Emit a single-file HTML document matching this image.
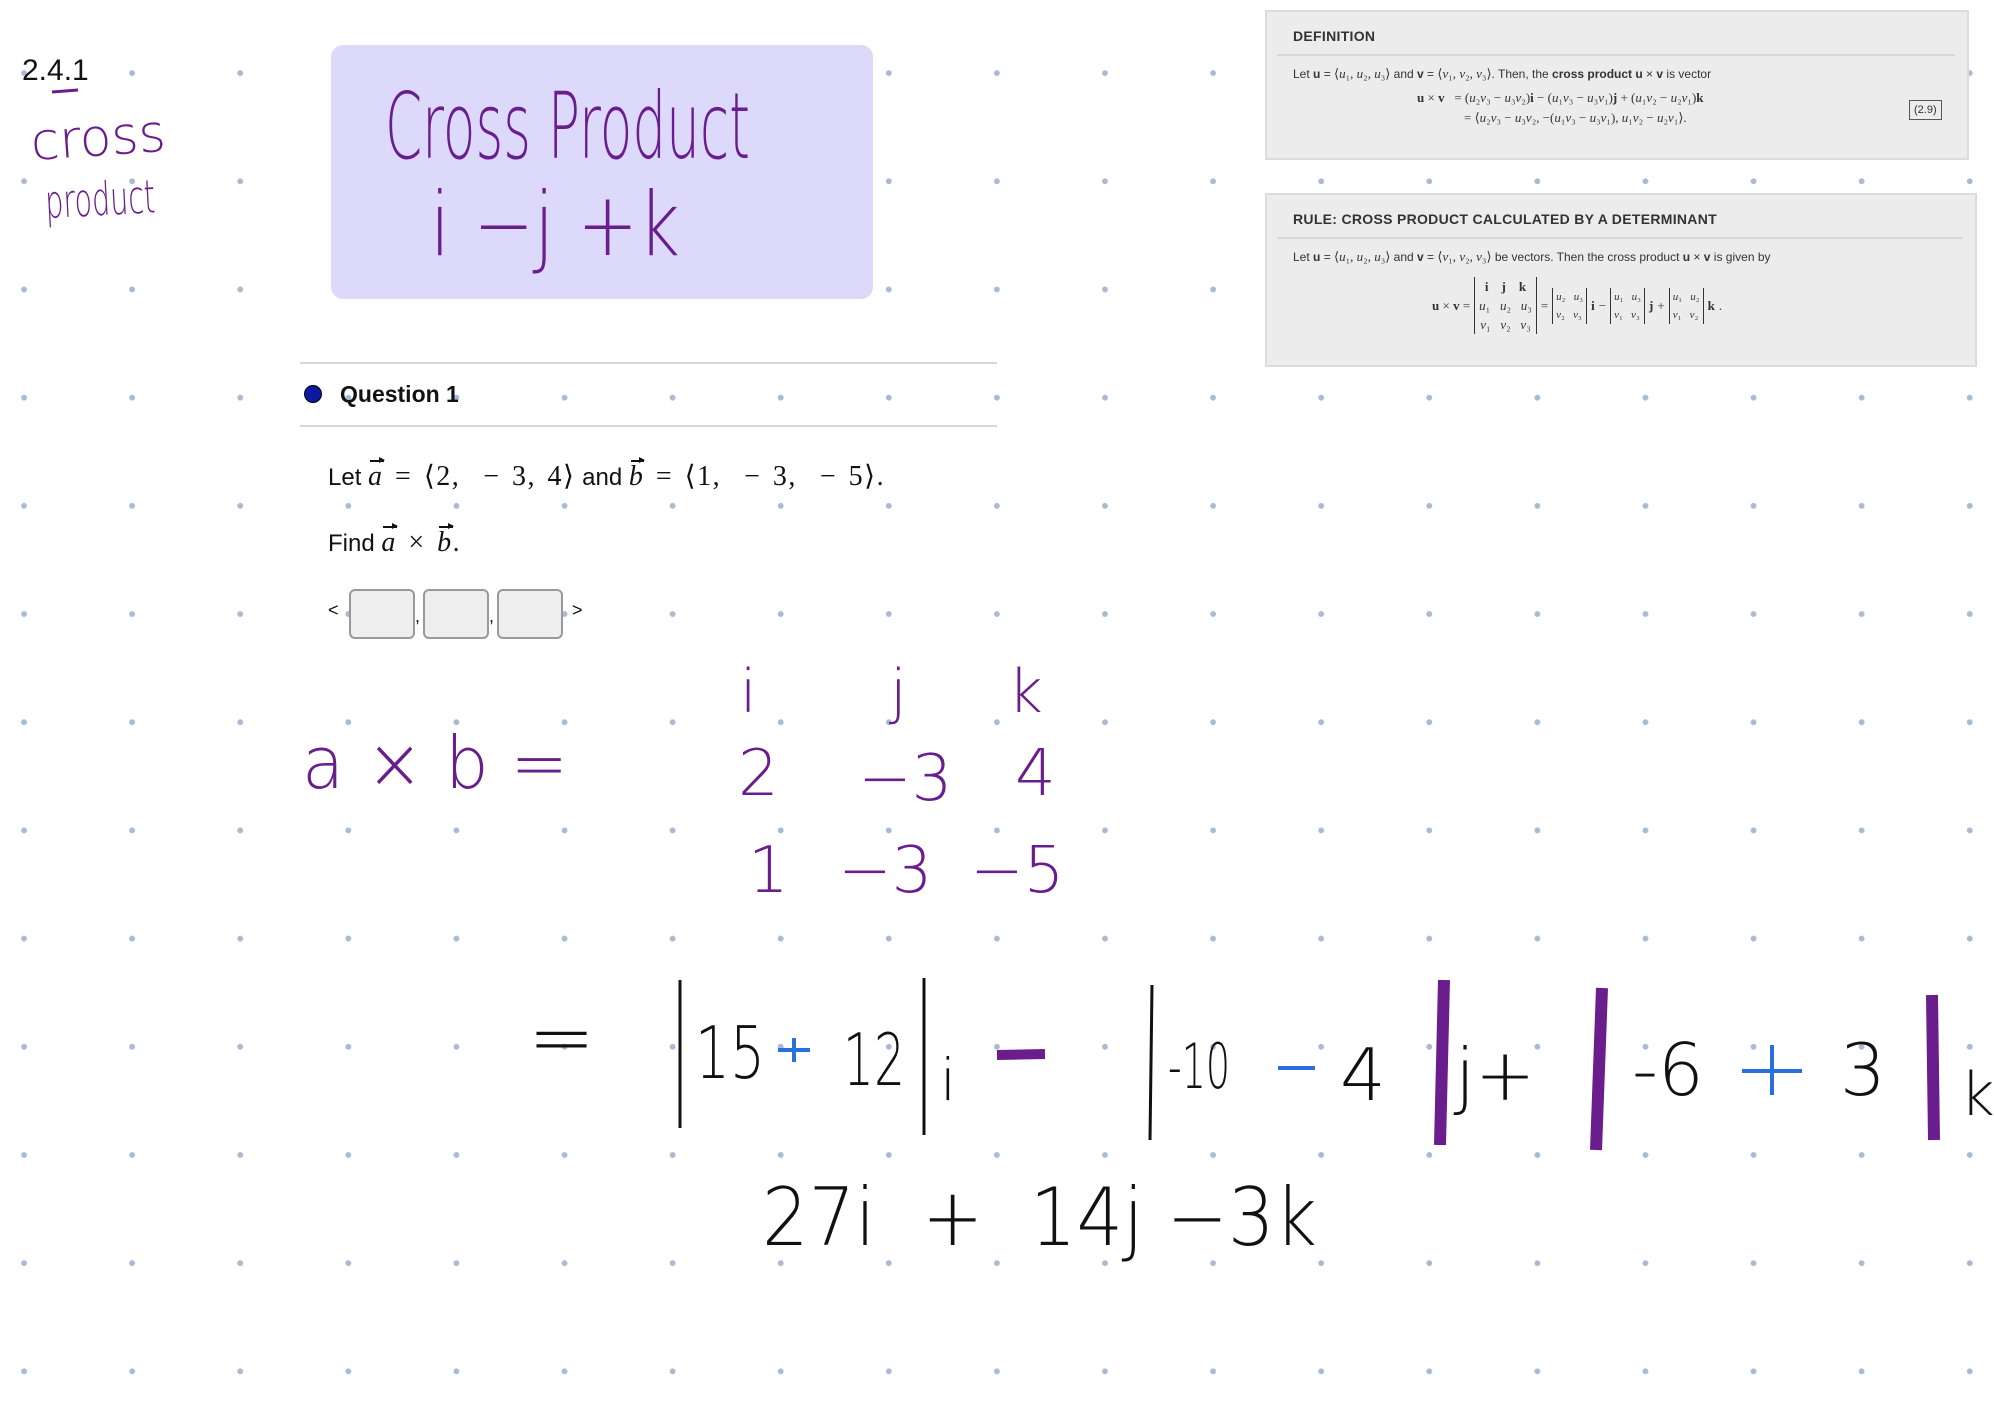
<!DOCTYPE html>
<html><head><meta charset="utf-8"><style>
html,body{margin:0;padding:0}
body{width:1994px;height:1410px;position:relative;overflow:hidden;background:#fff;
background-image:radial-gradient(circle,#a9bad3 2.6px,transparent 3.2px);
background-size:108.1px 108.2px;background-position:-30px 19px;
font-family:"Liberation Sans",sans-serif}
.box{position:absolute;background:#ececec;border:2px solid #dcdcdc;color:#333}
.box h4{margin:0;font-size:14px;font-weight:bold;letter-spacing:.3px;padding:16px 0 10px 26px;border-bottom:2px solid #d8d8d8;margin:0 12px 0 10px;padding-left:16px}
.m{font-family:"Liberation Serif",serif;font-size:13px}
.card{position:absolute;left:331px;top:45px;width:542px;height:254px;background:#dcd9fb;border-radius:12px}
.q{position:absolute;left:300px;width:697px;height:2px;background:#d6d6d6}
.t{position:absolute;font-size:24px;color:#111}
.ser{font-family:"Liberation Serif",serif;font-size:28px;letter-spacing:1.5px;word-spacing:3px}
.v{position:relative;display:inline-block}
.v:before{content:"";position:absolute;left:2px;right:0;top:-1px;height:1.5px;background:#111}
.v:after{content:"";position:absolute;right:-1px;top:-4px;border-left:6px solid #111;border-top:3.5px solid transparent;border-bottom:3.5px solid transparent}
.inp{position:absolute;top:589px;width:62px;height:46px;background:#eee;border:2px solid #999;border-radius:6px}
svg{position:absolute;left:0;top:0}
.h{font-family:"DejaVu Sans","Liberation Sans",sans-serif;font-weight:200;fill:#6a1d8c}
</style></head><body>

<div class="box" style="left:1265px;top:10px;width:700px;height:146px">
<h4>DEFINITION</h4>
<div style="font-size:12px;padding:10px 0 0 26px">Let <b>u</b> = <span class="m">⟨<i>u</i>₁, <i>u</i>₂, <i>u</i>₃⟩</span> and <b>v</b> = <span class="m">⟨<i>v</i>₁, <i>v</i>₂, <i>v</i>₃⟩</span>. Then, the <b>cross product u</b> × <b>v</b> is vector</div>
<div class="m" style="position:absolute;left:150px;top:78px;font-size:13px"><b>u</b> × <b>v</b> &nbsp; = (<i>u</i>₂<i>v</i>₃ − <i>u</i>₃<i>v</i>₂)<b>i</b> − (<i>u</i>₁<i>v</i>₃ − <i>u</i>₃<i>v</i>₁)<b>j</b> + (<i>u</i>₁<i>v</i>₂ − <i>u</i>₂<i>v</i>₁)<b>k</b></div>
<div class="m" style="position:absolute;left:197px;top:98px;font-size:13px">= ⟨<i>u</i>₂<i>v</i>₃ − <i>u</i>₃<i>v</i>₂, −(<i>u</i>₁<i>v</i>₃ − <i>u</i>₃<i>v</i>₁), <i>u</i>₁<i>v</i>₂ − <i>u</i>₂<i>v</i>₁⟩.</div>
<div style="position:absolute;left:642px;top:88px;border:1.5px solid #555;font-size:11px;padding:3px 4px">(2.9)</div>
</div>

<div class="box" style="left:1265px;top:193px;width:708px;height:170px">
<h4>RULE: CROSS PRODUCT CALCULATED BY A DETERMINANT</h4>
<div style="font-size:12px;padding:10px 0 0 26px">Let <b>u</b> = <span class="m">⟨<i>u</i>₁, <i>u</i>₂, <i>u</i>₃⟩</span> and <b>v</b> = <span class="m">⟨<i>v</i>₁, <i>v</i>₂, <i>v</i>₃⟩</span> be vectors. Then the cross product <b>u</b> × <b>v</b> is given by</div>
<div class="m" style="position:absolute;left:165px;top:82px;font-size:13px;display:flex;align-items:center;gap:4px">
<span><b>u</b> × <b>v</b> =</span>
<span style="border-left:1.5px solid #333;border-right:1.5px solid #333;padding:0 4px;line-height:19px;text-align:center">
<b>i</b> &nbsp;&nbsp; <b>j</b> &nbsp;&nbsp; <b>k</b><br><i>u</i>₁ &nbsp; <i>u</i>₂ &nbsp; <i>u</i>₃<br><i>v</i>₁ &nbsp; <i>v</i>₂ &nbsp; <i>v</i>₃</span>
<span>=</span>
<span style="border-left:1.5px solid #333;border-right:1.5px solid #333;padding:0 3px;line-height:18px;font-size:11px"><i>u</i>₂ &nbsp; <i>u</i>₃<br><i>v</i>₂ &nbsp; <i>v</i>₃</span><b>i</b> −
<span style="border-left:1.5px solid #333;border-right:1.5px solid #333;padding:0 3px;line-height:18px;font-size:11px"><i>u</i>₁ &nbsp; <i>u</i>₃<br><i>v</i>₁ &nbsp; <i>v</i>₃</span><b>j</b> +
<span style="border-left:1.5px solid #333;border-right:1.5px solid #333;padding:0 3px;line-height:18px;font-size:11px"><i>u</i>₁ &nbsp; <i>u</i>₂<br><i>v</i>₁ &nbsp; <i>v</i>₂</span><b>k</b>.
</div>
</div>

<div class="card"></div>

<div class="q" style="top:362px"></div>
<div style="position:absolute;left:304px;top:385px;width:18px;height:18px;border-radius:50%;background:#0b1a9e;border:1.5px solid #000;box-sizing:border-box"></div>
<div class="t" style="left:340px;top:381px;font-weight:bold;font-size:23px">Question 1</div>
<div class="q" style="top:425px"></div>
<div class="t" style="left:328px;top:459px">Let <span class="ser"><i class="v">a</i> = ⟨2, &nbsp;− 3, 4⟩</span> and <span class="ser"><i class="v">b</i> = ⟨1, &nbsp;− 3, &nbsp;− 5⟩.</span></div>
<div class="t" style="left:328px;top:527px">Find <span class="ser"><i class="v">a</i> × <i class="v">b</i>.</span></div>
<div class="t" style="left:328px;top:600px;font-size:18px">&lt;</div>
<div class="inp" style="left:349px"></div>
<div class="t" style="left:415px;top:606px;font-size:18px">,</div>
<div class="inp" style="left:423px"></div>
<div class="t" style="left:489px;top:606px;font-size:18px">,</div>
<div class="inp" style="left:497px"></div>
<div class="t" style="left:572px;top:600px;font-size:18px">&gt;</div>

<svg width="1994" height="1410">
<text x="22" y="80" font-family="Liberation Sans" font-size="30" fill="#111">2.4.1</text>
<line x1="52" y1="92" x2="78" y2="90" stroke="#6a1d8c" stroke-width="3"/>
<text class="h" x="32" y="160" font-size="52" textLength="135" lengthAdjust="spacingAndGlyphs" transform="rotate(-4 32 160)">cross</text>
<text class="h" x="46" y="218" font-size="46" textLength="110" lengthAdjust="spacingAndGlyphs" transform="rotate(-3 46 218)">product</text>

<text class="h" x="385" y="158" font-size="92" textLength="365" lengthAdjust="spacingAndGlyphs">Cross Product</text>
<text class="h" x="430" y="255" font-size="88" textLength="250" lengthAdjust="spacingAndGlyphs">i −j +k</text>

<text class="h" x="302" y="788" font-size="72" textLength="266" lengthAdjust="spacingAndGlyphs">a × b =</text>
<text class="h" x="740" y="712" font-size="60">i</text>
<text class="h" x="890" y="712" font-size="60">j</text>
<text class="h" x="1008" y="712" font-size="60">k</text>
<text class="h" x="738" y="795" font-size="64">2</text>
<text class="h" x="858" y="800" font-size="64">−3</text>
<text class="h" x="1015" y="795" font-size="64">4</text>
<text class="h" x="748" y="892" font-size="64">1</text>
<text class="h" x="838" y="892" font-size="64">−3</text>
<text class="h" x="970" y="892" font-size="64">−5</text>

<text x="528" y="1065" font-size="80" font-family="DejaVu Sans" font-weight="200" fill="#111">=</text>
<g stroke="#111" stroke-width="3">
<line x1="680" y1="980" x2="680" y2="1128"/><line x1="924" y1="978" x2="924" y2="1135"/>
<line x1="1152" y1="985" x2="1150" y2="1140"/>
</g>
<g stroke="#6a1d8c" stroke-width="12">
<line x1="1444" y1="980" x2="1440" y2="1145"/><line x1="1602" y1="988" x2="1596" y2="1150"/>
<line x1="1932" y1="995" x2="1934" y2="1140"/>
</g>
<g font-family="DejaVu Sans" font-weight="200" fill="#111" font-size="72">
<text x="695" y="1078" textLength="70" lengthAdjust="spacingAndGlyphs">15</text><text x="843" y="1085" textLength="62" lengthAdjust="spacingAndGlyphs">12</text>
<text x="940" y="1100" font-size="58">i</text>
<text x="1168" y="1088" font-size="62" textLength="62" lengthAdjust="spacingAndGlyphs">-10</text><text x="1340" y="1100">4</text>
<text x="1455" y="1100">j+</text>
<text x="1632" y="1095">-6</text><text x="1840" y="1095">3</text>
<text x="1960" y="1115" font-size="60">k</text>
<text x="762" y="1245" font-size="80" textLength="555" lengthAdjust="spacingAndGlyphs">27i &#160;+ &#160;14j −3k</text>
</g>
<g stroke="#2a6fe0" stroke-width="4">
<line x1="778" y1="1050" x2="810" y2="1050"/><line x1="794" y1="1038" x2="794" y2="1062"/>
<line x1="1278" y1="1068" x2="1315" y2="1068"/>
<line x1="1742" y1="1071" x2="1802" y2="1071"/><line x1="1772" y1="1045" x2="1772" y2="1095"/>
</g>
<line x1="997" y1="1055" x2="1045" y2="1054" stroke="#6a1d8c" stroke-width="10"/>
</svg>
</body></html>
